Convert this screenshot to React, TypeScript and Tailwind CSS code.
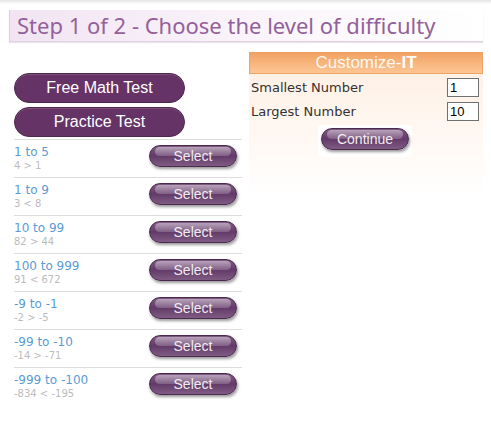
const levels = [
  { range: "1 to 5", sample: "4 > 1" },
  { range: "1 to 9", sample: "3 < 8" },
  { range: "10 to 99", sample: "82 > 44" },
  { range: "100 to 999", sample: "91 < 672" },
  { range: "-9 to -1", sample: "-2 > -5" },
  { range: "-99 to -10", sample: "-14 > -71" },
  { range: "-999 to -100", sample: "-834 < -195" },
];

const GlossyButton = ({ label }: { label: string }) => (
  <button
    type="button"
    className="relative w-[88px] h-[22px] rounded-full border border-[#4a2a4d] bg-gradient-to-b from-[#7d5a80] via-[#633a68] to-[#7f5c84] shadow-[1px_2px_3px_rgba(0,0,0,0.4)] text-[14px] leading-[20px] text-[#f0ecf0] font-['Liberation_Sans',Arial,sans-serif] overflow-hidden"
  >
    <span className="absolute left-[5px] right-[5px] top-[1px] h-[9px] rounded-full bg-gradient-to-b from-[#cdbccf] to-[#8a6a8e] opacity-75" />
    <span className="relative">{label}</span>
  </button>
);

const PillButton = ({ label }: { label: string }) => (
  <button
    type="button"
    className="w-[171px] h-[30px] rounded-full bg-[#663366] border border-[#4f2650] text-white text-[16px] leading-[28px] font-['Liberation_Sans',Arial,sans-serif] shadow-[inset_0_1px_0_rgba(255,255,255,0.15)]"
  >
    {label}
  </button>
);

export default function App() {
  return (
    <div className="w-[491px] h-[427px] bg-white font-['DejaVu_Sans',Verdana,sans-serif]">
      <div className="h-[4px] bg-gradient-to-b from-[#e4e4e4] to-white" />
      <div className="ml-[9px] mt-[6px] w-[474px] h-[32px] border-l border-b border-[#e2d0e2] bg-gradient-to-r from-[#f2e4f2] via-[#faf4fa] to-white pl-[7px] text-[22px] leading-[30px] text-[#93619a] font-['Noto_Sans',Tahoma,sans-serif] shadow-[0_1px_1px_rgba(180,150,180,0.25)]">
        Step 1 of 2 - Choose the level of difficulty
      </div>

      <div className="flex mt-[10px]">
        <div className="ml-[14px] w-[228px] pt-[21px]">
          <div className="flex flex-col gap-[4px]">
            <PillButton label="Free Math Test" />
            <PillButton label="Practice Test" />
          </div>
          <div className="mt-[2px]">
            {levels.map((level) => (
              <div
                key={level.range}
                className="h-[38px] border-t border-[#dddddd] flex justify-between"
              >
                <div className="pt-[5px]">
                  <div className="text-[12px] leading-[15px] text-[#5b9bd5]">
                    {level.range}
                  </div>
                  <div className="text-[10px] leading-[12px] text-[#bcbcbc]">
                    {level.sample}
                  </div>
                </div>
                <div className="pt-[4px] pr-[5px]">
                  <GlossyButton label="Select" />
                </div>
              </div>
            ))}
          </div>
        </div>

        <div className="ml-[7px] w-[234px]">
          <div className="h-[22px] border border-[#eba468] bg-gradient-to-b from-[#f1a262] via-[#f8b57c] to-[#fcc594] text-center text-[17px] leading-[20px] text-[#fff8f2] font-['Liberation_Sans',Arial,sans-serif]">
            Customize-<span className="font-bold text-white">IT</span>
          </div>
          <div className="h-[123px] bg-gradient-to-b from-[#fff1e6] to-white pt-[4px] pl-[2px] pr-[4px]">
            <div className="flex items-center justify-between h-[19px]">
              <span className="text-[13px] text-[#333333]">Smallest Number</span>
              <input
                defaultValue="1"
                className="w-[32px] h-[19px] border border-[#707070] bg-white px-[2px] text-[13px] text-black font-['Liberation_Sans',Arial,sans-serif] outline-none"
              />
            </div>
            <div className="flex items-center justify-between h-[19px] mt-[5px]">
              <span className="text-[13px] text-[#333333]">Largest Number</span>
              <input
                defaultValue="10"
                className="w-[32px] h-[19px] border border-[#707070] bg-white px-[2px] text-[13px] text-black font-['Liberation_Sans',Arial,sans-serif] outline-none"
              />
            </div>
            <div className="flex justify-center mt-[4px]">
              <div className="w-[94px] h-[32px] bg-white flex justify-center pt-[3px]">
                <GlossyButton label="Continue" />
              </div>
            </div>
          </div>
        </div>
      </div>
    </div>
  );
}
